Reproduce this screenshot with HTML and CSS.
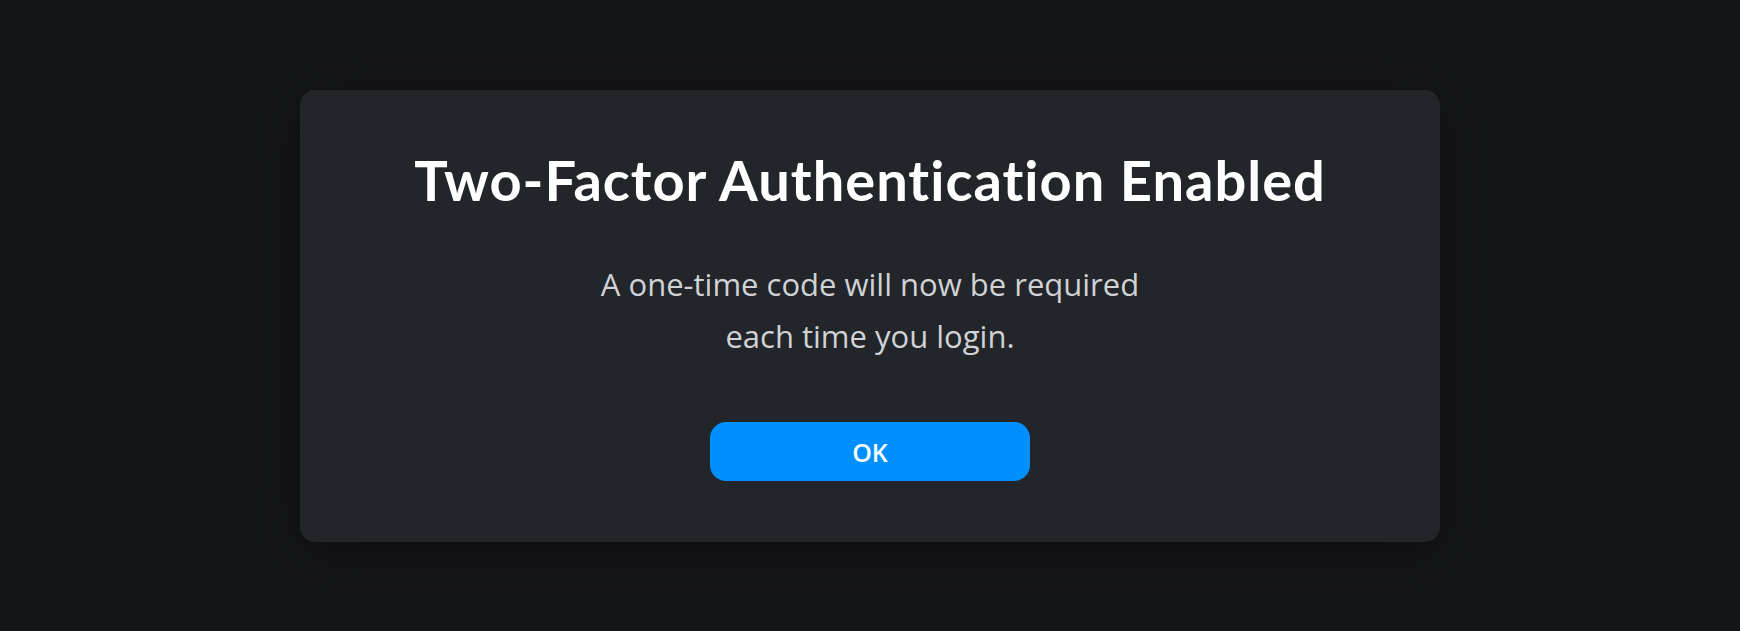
FILE: index.html
```html
<!DOCTYPE html>
<html lang="en">

<head>
    <meta charset="UTF-8">
    <meta name="viewport" content="width=device-width, initial-scale=1.0">
    <title>Two-Factor Authentication</title>
    <link rel="stylesheet" href="styles.css">
</head>

<body>
    <div class="overlay">
        <div class="dialog">
            <h1>Two-Factor Authentication Enabled</h1>
            <p class="message">A one-time code will now be required<br>each time you login.</p>
            <button class="ok-button">OK</button>
        </div>
    </div>
</body>

</html>
```

FILE: styles.css
```css
body {
    margin: 0;
    background-color: #151618;
    font-family: "Open Sans", sans-serif;
    height: 100vh;
    overflow: hidden;
}

.overlay {
    display: flex;
    justify-content: center;
    padding-top: 90px;
}

.dialog {
    width: 1140px;
    height: 452px;
    box-sizing: border-box;
    background-color: #22252a;
    border-radius: 15px;
    box-shadow: 0 10px 60px rgba(0, 0, 0, 0.45);
    display: flex;
    flex-direction: column;
    align-items: center;
    padding-top: 50px;
}

.dialog h1 {
    margin: 0;
    font-family: "Lato", sans-serif;
    font-weight: 700;
    font-size: 56px;
    line-height: 80px;
    color: #fff;
    letter-spacing: 1px;
}

.message {
    margin: 38px 0 0;
    font-size: 31px;
    line-height: 52px;
    color: #d0d2d5;
    text-align: center;
}

.ok-button {
    margin-top: 60px;
    width: 320px;
    height: 59px;
    border: none;
    border-radius: 16px;
    background-color: #008fff;
    color: #fff;
    font-family: "Open Sans", sans-serif;
    font-size: 25px;
    font-weight: 600;
    cursor: pointer;
}
```
